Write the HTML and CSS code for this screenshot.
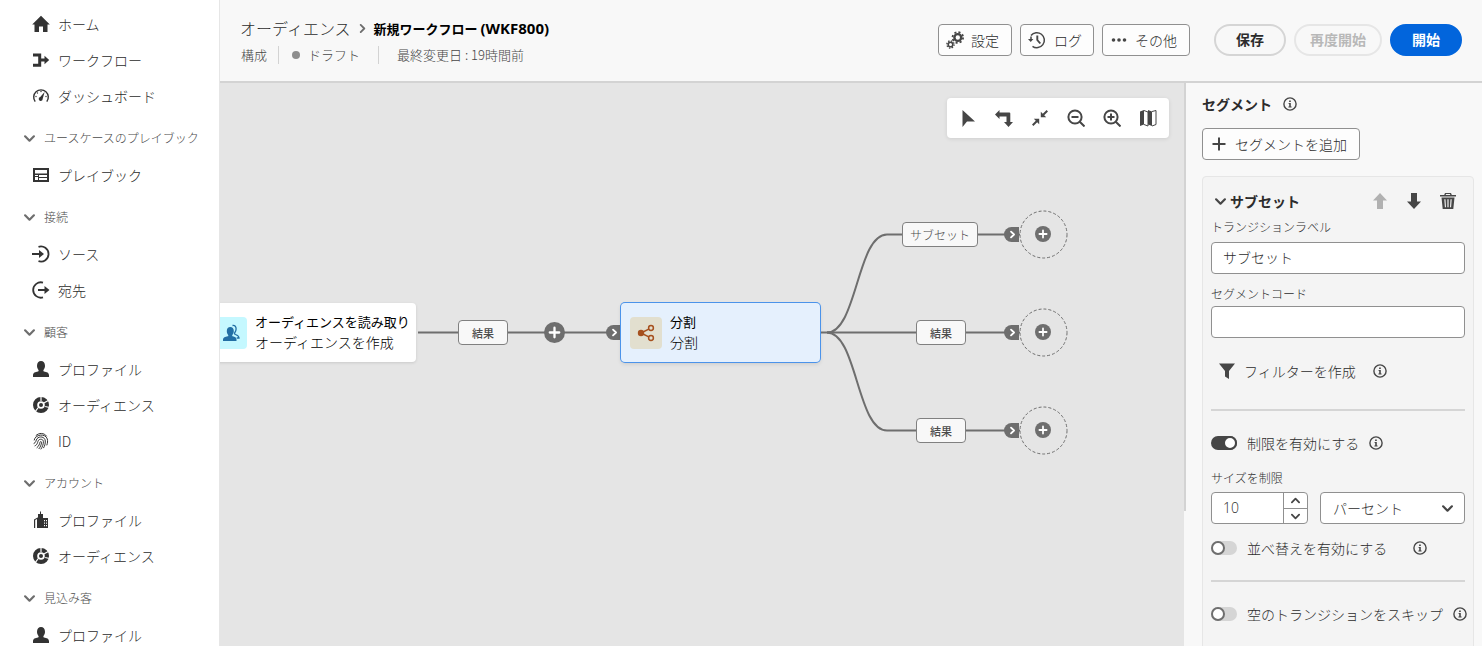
FILE: index.html
```html
<!DOCTYPE html>
<html lang="ja">
<head>
<meta charset="utf-8">
<title>新規ワークフロー (WKF800)</title>
<link rel="stylesheet" href="styles.css">
</head>
<body>
<svg class="sprite" aria-hidden="true">
  <symbol id="chev" viewBox="0 0 10 10"><path d="M1 3l4 4 4-4" fill="none" stroke="currentColor" stroke-width="2" stroke-linecap="round" stroke-linejoin="round"/></symbol>
  <symbol id="info" viewBox="0 0 14 14"><circle cx="7" cy="7" r="6.1" fill="none" stroke="currentColor" stroke-width="1.4"/><path d="M6.1 3.4h1.7v1.5H6.1zM5.6 6h2.2v3.6h.8v1H5.4v-1h.8V7h-.6z" fill="currentColor"/></symbol>
  <symbol id="user" viewBox="0 0 18 18"><path d="M17 15.2c0-2.600-2.300-3.300-5-3.800-.6-.1-.8-.8-.5-1.400.9-1.100 1.500-2.700 1.500-4.200C13 2.700 11.400 1 9 1S5 2.700 5 5.800c0 1.500.6 3.100 1.500 4.200.3.600.1 1.300-.5 1.400-2.700.5-5 1.200-5 3.800V17h16z" fill="currentColor"/></symbol>
  <symbol id="audience" viewBox="0 0 18 18"><circle cx="9" cy="9" r="5.900" fill="none" stroke="currentColor" stroke-width="4.200"/><circle cx="9" cy="9" r="2" fill="currentColor"/><path d="M9 5V.5M11.800 7l5-2.800M6.300 11.500L3.200 15.700M13.200 10.500l4.300 1" stroke="#fff" stroke-width="1.200"/></symbol>
  <symbol id="plus" viewBox="0 0 20 20"><circle cx="10" cy="10" r="10" fill="#6e6e6e"/><path d="M10 5.500v9M5.500 10h9" stroke="#fff" stroke-width="2.200" stroke-linecap="round"/></symbol>
  <symbol id="port" viewBox="0 0 16 16"><path d="M16 0H8a8 8 0 0 0 0 16h8z" fill="#6e6e6e"/><path d="M7.500 5l3.200 3-3.200 3" fill="none" stroke="#fff" stroke-width="2" stroke-linecap="round" stroke-linejoin="round"/></symbol>
</svg>
<div class="app">
  <nav class="sidebar" aria-label="メインナビゲーション">
    <a class="nav-item" href="#"><svg class="icon"><path d="M9 .8L.2 9.500h2.300V17h4.500v-5.500h4V17h4.500V9.500h2.300z" fill="currentColor"/></svg>ホーム</a>
    <a class="nav-item" href="#"><svg class="icon"><path d="M1 2.500h8.200v5h3.300V4.800L17.200 9l-4.700 4.200v-2.700H9.200v5.300H1v-3h5.200V5.500H1z" fill="currentColor"/></svg>ワークフロー</a>
    <a class="nav-item" href="#"><svg class="icon"><path d="M3.200 14.600A7.300 7.300 0 1 1 14.800 14.600" fill="none" stroke="currentColor" stroke-width="1.400"/><path d="M12.600 5L8.200 10a2 2 0 1 0 2.500 1.800z" fill="currentColor"/><g fill="currentColor"><circle cx="9" cy="4.500" r=".7"/><circle cx="5.500" cy="6" r=".7"/><circle cx="4" cy="9.500" r=".7"/><circle cx="14" cy="9.500" r=".7"/></g></svg>ダッシュボード</a>
    <button class="nav-heading"><svg class="chev"><use href="#chev"/></svg>ユースケースのプレイブック</button>
    <a class="nav-item" href="#"><svg class="icon"><path d="M1 2h16v14H1zM3 4v3.500h12V4zM3 9v1h3V9zM3 11v3h3v-3zM7 9v2h8V9zM7 12v2h8v-2z" fill="currentColor" fill-rule="evenodd"/></svg>プレイブック</a>
    <button class="nav-heading"><svg class="chev"><use href="#chev"/></svg>接続</button>
    <a class="nav-item" href="#"><svg class="icon"><path d="M6.500 1.800A7.600 7.600 0 1 1 6.500 16.200" fill="none" stroke="currentColor" stroke-width="1.800"/><path d="M0 8h7V5l5 4-5 4v-3H0z" fill="currentColor"/></svg>ソース</a>
    <a class="nav-item" href="#"><svg class="icon"><path d="M11 1.600A7.700 7.700 0 1 0 11 16.400" fill="none" stroke="currentColor" stroke-width="1.800"/><path d="M6 8h6.500V5l5 4-5 4v-3H6z" fill="currentColor"/></svg>宛先</a>
    <button class="nav-heading"><svg class="chev"><use href="#chev"/></svg>顧客</button>
    <a class="nav-item" href="#"><svg class="icon"><use href="#user"/></svg>プロファイル</a>
    <a class="nav-item" href="#"><svg class="icon"><use href="#audience"/></svg>オーディエンス</a>
    <a class="nav-item" href="#"><svg class="icon"><path d="M4 3.500c3-3 8-2.800 10.500.5M2.200 8C3 2.200 13.500 1 15.300 7c.5 2 .3 4-.4 6M2 11.500c2.200-.8 1.800-3.300 3-4.800C7.300 3.800 13 4.500 13.300 9c.1 2.800-.6 5-1.700 6.800M3 13.800C6 12.500 5.300 10 6.400 8.400c1.400-1.900 4.900-1.400 5 1.200C11.400 12.500 10.300 15 9 17M5 15.600c2.300-1.700 2.400-3.700 3-5.400.4-1 1.600-.8 1.500.3C9.400 12.800 8.300 15 7 16.700" fill="none" stroke="currentColor" stroke-linecap="round"/></svg>ID</a>
    <button class="nav-heading"><svg class="chev"><use href="#chev"/></svg>アカウント</button>
    <a class="nav-item" href="#"><svg class="icon"><path d="M2 17V8.500l4-2.200V17H5V8L3.200 9v8zM6 17V3h2V.5h1V3h2v4h5v10zM12 9v1.200h1V9zM14 9v1.200h1V9zM12 11.500v1.200h1v-1.200zM14 11.500v1.200h1v-1.200zM12 14v1.200h1V14zM14 14v1.200h1V14z" fill="currentColor" fill-rule="evenodd"/></svg>プロファイル</a>
    <a class="nav-item" href="#"><svg class="icon"><use href="#audience"/></svg>オーディエンス</a>
    <button class="nav-heading"><svg class="chev"><use href="#chev"/></svg>見込み客</button>
    <a class="nav-item" href="#"><svg class="icon"><use href="#user"/></svg>プロファイル</a>
  </nav>

  <div class="workspace">
    <header class="topbar">
      <div class="titles">
        <div class="crumbs"><a href="#">オーディエンス</a><svg class="crumb-chev"><use href="#chev"/></svg><h1>新規ワークフロー <span class="code">(WKF800)</span></h1></div>
        <div class="meta"><span>構成</span><span class="status">ドラフト</span><span>最終変更日 : 19時間前</span></div>
      </div>
      <div class="actions">
        <button class="btn"><svg class="icon"><g fill="none" stroke="currentColor"><circle cx="11.800" cy="6.500" r="3.400" stroke-width="2.400"/><circle cx="11.800" cy="6.500" r="5.300" stroke-width="1.800" stroke-dasharray="2.080 2.080"/><circle cx="4.500" cy="13.500" r="2.300" stroke-width="1.600"/><circle cx="4.500" cy="13.500" r="3.600" stroke-width="1.400" stroke-dasharray="1.410 1.410"/></g></svg>設定</button>
        <button class="btn btn-log"><svg class="icon"><path d="M3 4.500A7.500 7.500 0 1 1 4.500 15.300M3 5.500v3" fill="none" stroke="currentColor" stroke-width="1.500"/><path d="M0 8h5.400L2.700 11z" fill="currentColor"/><path d="M9.300 4.500V9l3 3.500" fill="none" stroke="currentColor" stroke-width="1.900"/></svg>ログ</button>
        <button class="btn"><svg class="icon"><g fill="currentColor"><circle cx="3.500" cy="9" r="1.800"/><circle cx="9" cy="9" r="1.800"/><circle cx="14.500" cy="9" r="1.800"/></g></svg>その他</button>
        <button class="pill pill-first">保存</button>
        <button class="pill" disabled>再度開始</button>
        <button class="pill pill-cta">開始</button>
      </div>
    </header>

    <div class="body">
      <main class="canvas">
        <svg class="edges" aria-hidden="true">
          <g fill="none" stroke="#6e6e6e" stroke-width="2">
            <path d="M198 249.500H401"/>
            <path d="M600 249.500H800"/>
            <path d="M607 249.500C637 249.500 637 151.500 667 151.500H800"/>
            <path d="M607 249.500C637 249.500 637 347.500 667 347.500H800"/>
          </g>
          <g fill="none" stroke="#6e6e6e" stroke-dasharray="3 2">
            <circle cx="823.500" cy="151.500" r="23.500"/><circle cx="823.500" cy="249.500" r="23.500"/><circle cx="823.500" cy="347.500" r="23.500"/>
          </g>
          <use href="#port" x="386" y="242" width="15" height="15"/>
          <use href="#port" x="784" y="144" width="15" height="15"/>
          <use href="#port" x="784" y="242" width="15" height="15"/>
          <use href="#port" x="784" y="340" width="15" height="15"/>
          <use href="#plus" x="324" y="239" width="21" height="21"/>
          <use href="#plus" x="815" y="143" width="16" height="16"/>
          <use href="#plus" x="815" y="241" width="16" height="16"/>
          <use href="#plus" x="815" y="339" width="16" height="16"/>
        </svg>

        <div class="node node-read">
          <span class="node-icon teal"><svg class="icon"><path d="M10.500 1.500c2.500-.4 3.700 1.200 3.600 3.500 0 1.700-.7 3-1.500 4-.4.700.2 1.200.9 1.500 2 .8 3.500 1.500 3.500 3.500h-2.300" fill="none" stroke="currentColor" stroke-width="1.300"/><path d="M14.500 15.500c0-2-1.600-2.800-3.700-3.200-.6-.2-.8-.8-.4-1.400.8-1 1.400-2.300 1.400-3.900 0-2.600-1.400-4-3.500-4S4.800 4.400 4.800 7c0 1.600.5 2.900 1.300 3.900.4.600.3 1.200-.4 1.400-2.600.4-4.700 1.200-4.700 3.200V17h13.500z" fill="currentColor"/></svg></span>
          <span class="node-text"><strong>オーディエンスを読み取り</strong><span>オーディエンスを作成</span></span>
        </div>
        <div class="node node-split">
          <span class="node-icon sand"><svg class="icon"><circle cx="4" cy="9" r="3.200" fill="currentColor"/><g fill="none" stroke="currentColor" stroke-width="1.500"><circle cx="14" cy="4" r="2.400"/><circle cx="14" cy="14" r="2.400"/><path d="M4 9l7.800-3.900M4 9l7.800 3.900"/></g></svg></span>
          <span class="node-text"><strong>分割</strong><span>分割</span></span>
        </div>
        <span class="tag tag-in">結果</span>
        <span class="tag tag-subset">サブセット</span>
        <span class="tag tag-mid">結果</span>
        <span class="tag tag-low">結果</span>

        <div class="toolbar">
          <button aria-label="選択"><svg class="icon"><path d="M3.500 1v17l4.500-5.500h8z" fill="currentColor"/></svg></button>
          <button aria-label="向きを変更"><svg class="icon"><path d="M4.500 1v2.500h9.800a1 1 0 0 1 1 1V13H18l-4.500 5L9 13h2.500V7.500h-7V10L0 5.500z" fill="currentColor"/></svg></button>
          <button aria-label="全体を表示"><svg class="icon"><path d="M9.800 8.200V2.800l2 2L15.600 1 17 2.400l-3.800 3.800 2 2zM8.200 9.800v5.400l-2-2L2.400 17 1 15.600l3.800-3.800-2-2z" fill="currentColor"/></svg></button>
          <button aria-label="縮小"><svg class="icon"><g fill="none" stroke="currentColor" stroke-width="2"><circle cx="8" cy="8" r="6.600"/><path d="M12.500 12.500l5 5M4.500 8h7"/></g></svg></button>
          <button aria-label="拡大"><svg class="icon"><g fill="none" stroke="currentColor" stroke-width="2"><circle cx="8" cy="8" r="6.600"/><path d="M12.500 12.500l5 5M4.500 8h7M8 4.500v7"/></g></svg></button>
          <button aria-label="マップ"><svg class="icon"><path d="M1 2.500L5 1v14.500L1 17zM9 1l4 1.500V17l-4-1.500z" fill="currentColor"/><path d="M5 1.500l4 1.500V17l-4-1.500M13 2.500l4-1V15.500L13 17" fill="none" stroke="currentColor"/></svg></button>
        </div>
      </main>

      <aside class="panel">
        <div class="panel-title"><h2>セグメント</h2><svg class="info"><use href="#info"/></svg></div>
        <button class="btn btn-add"><svg class="icon"><path d="M9 2.500v13M2.500 9h13" stroke="currentColor" stroke-width="2"/></svg>セグメントを追加</button>
        <section class="card">
          <div class="card-head">
            <svg class="chev dark"><use href="#chev"/></svg><h3>サブセット</h3>
            <button disabled aria-label="上へ"><svg class="icon"><path d="M9 1l7 7.500h-4V17H6V8.500H2z" fill="currentColor"/></svg></button>
            <button aria-label="下へ"><svg class="icon"><path d="M9 17l7-7.500h-4V1H6v8.500H2z" fill="currentColor"/></svg></button>
            <button aria-label="削除"><svg class="icon"><path d="M6 1h6l.8 2H17v1.500H1V3h4.200zM7 2l-.3 1h4.600L11 2zM2.500 5.500h13L14.300 17H3.700zM5.300 7.200l.6 8H7l-.5-8zM8.400 7.200v8h1.200v-8zM11.500 7.200l-.5 8h1.100l.6-8z" fill="currentColor" fill-rule="evenodd"/></svg></button>
          </div>
          <label class="field"><span>トランジションラベル</span><input type="text" value="サブセット"></label>
          <label class="field"><span>セグメントコード</span><input type="text"></label>
          <div class="filter"><button><svg class="icon"><path d="M1 1.500h16l-6 7.500v8l-4-2.500V9z" fill="currentColor"/></svg>フィルターを作成</button><svg class="info"><use href="#info"/></svg></div>
          <hr>
          <div class="switch-row"><label><input type="checkbox" class="switch" checked>制限を有効にする</label><svg class="info"><use href="#info"/></svg></div>
          <div class="limit">
            <label for="limit">サイズを制限</label>
            <div class="limit-row">
              <div class="stepper"><input id="limit" type="number" value="10"><div class="steps"><button aria-label="増やす"><svg class="chev up"><use href="#chev"/></svg></button><button aria-label="減らす"><svg class="chev"><use href="#chev"/></svg></button></div></div>
              <div class="select"><select aria-label="単位"><option>パーセント</option></select><svg class="chev"><use href="#chev"/></svg></div>
            </div>
          </div>
          <div class="switch-row sort"><label><input type="checkbox" class="switch">並べ替えを有効にする</label><svg class="info"><use href="#info"/></svg></div>
          <hr>
          <div class="switch-row"><label><input type="checkbox" class="switch">空のトランジションをスキップ</label><svg class="info"><use href="#info"/></svg></div>
        </section>
      </aside>
    </div>
  </div>
</div>
</body>
</html>
```
FILE: styles.css
```css
*, *::before { box-sizing: border-box; }
body {
  margin: 0;
  font-family: "Noto Sans CJK JP", sans-serif;
  font-size: 14px;
  font-weight: 300;
  line-height: 20px;
  color: #2c2c2c;
}
button, input, select { font: inherit; color: inherit; }
button { margin: 0; padding: 0; border: 0; background: none; cursor: pointer; }
a { color: inherit; text-decoration: none; }
h1, h2, h3 { margin: 0; font-size: 14px; font-weight: 700; }
svg { display: block; flex: none; }
.sprite { position: absolute; width: 0; height: 0; }
.icon { width: 18px; height: 18px; color: #464646; }
.chev { width: 11px; height: 11px; color: #6e6e6e; }
.info { width: 14px; height: 14px; color: #464646; }

.app { display: flex; height: 100vh; overflow: hidden; }
.sidebar {
  flex: none;
  width: 220px;
  padding-top: 6px;
  overflow: hidden;
  border-right: 1px solid #e6e6e6;
  background: #fff;
}
.nav-item { display: flex; align-items: center; gap: 8px; height: 36px; padding-left: 32px; }
.nav-item .icon { color: #333; }
.nav-heading {
  display: flex;
  align-items: center;
  gap: 9px;
  width: 100%;
  height: 43px;
  padding: 5px 0 0 24px;
  font-size: 12px;
  color: #4b4b4b;
  white-space: nowrap;
}

.workspace { flex: 1; min-width: 0; display: flex; flex-direction: column; }
.topbar {
  display: flex;
  justify-content: space-between;
  height: 83px;
  padding: 16px 20px 0;
  border-bottom: 2px solid #d3d3d3;
  background: #f8f8f8;
}
.crumbs { display: flex; align-items: center; height: 24px; white-space: nowrap; }
.crumbs a { font-size: 16px; }
.crumbs h1 { font-size: 13px; color: #000; }
.code { font-family: "Open Sans", sans-serif; font-size: 15px; }
.crumb-chev { width: 9px; height: 9px; margin: 0 7px; color: #6e6e6e; transform: rotate(-90deg); }
.meta { display: flex; align-items: center; height: 18px; margin-top: 6px; font-size: 13px; line-height: 18px; white-space: nowrap; color: #464646; }
.meta span:first-child { padding: 0 11px 0 1px; }
.meta .status { display: flex; align-items: center; gap: 8px; padding: 0 18px 0 13px; border: solid #d3d3d3; border-width: 0 1px; }
.status::before { content: ""; width: 8px; height: 8px; border-radius: 50%; background: #8e8e8e; }
.meta span:last-child { padding-left: 18px; }
.actions { display: flex; gap: 8px; padding-top: 8px; }
.btn {
  display: flex;
  align-items: center;
  gap: 7px;
  height: 32px;
  padding: 0 12px 0 7px;
  border: 1px solid #909090;
  border-radius: 4px;
  background: #fdfdfd;
  white-space: nowrap;
}
.btn-log { gap: 8px; padding-right: 11px; }
.pill {
  height: 32px;
  padding: 0 20px 2px;
  border: 2px solid #d5d5d5;
  border-radius: 16px;
  font-weight: 700;
  line-height: 26px;
  white-space: nowrap;
}
.pill-first { margin-left: 16px; }
.pill:disabled { padding: 0 14px 2px; border-color: #e6e6e6; color: #b8b8b8; }
.pill-cta { border-color: #0265dc; background: #0265dc; color: #fff; }

.body { flex: 1; min-height: 0; display: flex; }
.canvas { position: relative; flex: 1; min-width: 0; overflow: hidden; background: #e5e5e5; }
.edges { position: absolute; left: 0; top: 0; width: 100%; height: 100%; }
.node {
  position: absolute;
  top: 220px;
  display: flex;
  align-items: center;
  gap: 8px;
  height: 59px;
  padding-left: 9px;
  border-radius: 4px;
  background: #fff;
  box-shadow: 0 1px 3px rgba(0, 0, 0, .12);
  color: #000;
  white-space: nowrap;
}
.node-read { left: -14px; width: 210px; }
.node-split { left: 401px; width: 199px; background: #e5f0fd; box-shadow: 0 0 0 1px #4b93ea, 0 2px 4px rgba(0, 0, 0, .12); }
.node-icon { display: grid; place-items: center; width: 32px; height: 32px; border-radius: 4px; }
.teal { background: #c5f8ff; }
.teal .icon { color: #226fa5; }
.sand { background: #e2dfcf; }
.sand .icon { color: #a6501e; }
.node-text { display: flex; flex-direction: column; line-height: 21px; padding-bottom: 2px; }
.node-text strong { font-size: 13px; }
.tag {
  position: absolute;
  display: grid;
  place-items: center;
  width: 50px;
  height: 25px;
  border: 1px solid #808080;
  border-radius: 4px;
  background: #f8f8f8;
  font-size: 11px;
  font-weight: 500;
  color: #4b4b4b;
}
.tag-in { left: 238px; top: 237px; }
.tag-subset { left: 682px; top: 139px; width: 76px; font-size: 12px; font-weight: 300; }
.tag-mid { left: 696px; top: 237px; }
.tag-low { left: 696px; top: 335px; }
.toolbar {
  position: absolute;
  top: 15px;
  right: 15px;
  display: flex;
  gap: 18px;
  padding: 11px 12px;
  border-radius: 4px;
  background: #fff;
  box-shadow: 0 1px 4px rgba(0, 0, 0, .1);
}

.panel {
  position: relative;
  flex: none;
  width: 298px;
  padding: 11px 8px 0 18px;
  overflow: hidden;
  background: #f8f8f8;
}
.panel::before { content: ""; position: absolute; left: 0; top: 0; width: 2px; height: 76%; background: #d3d3d3; }
.panel-title { display: flex; align-items: center; gap: 11px; height: 20px; margin-bottom: 14px; }
.btn-add { gap: 7px; }
.card { min-height: 100%; margin-top: 16px; padding: 12px 8px; border: 1px solid #e6e6e6; border-radius: 4px; background: #f4f4f4; }
.card-head { display: flex; align-items: center; height: 24px; }
.card-head h3 { flex: 1; margin-left: 4px; }
.dark { margin-left: 4px; color: #464646; }
.card-head button { margin-left: 16px; }
.card-head button:last-child { margin-right: 8px; }
.card-head button:disabled .icon { color: #b1b1b1; }
.field { display: block; margin-bottom: 8px; font-size: 12px; }
.field span { display: block; height: 24px; line-height: 24px; }
.card-head + .field span { height: 29px; line-height: 28px; }
input[type="text"], .stepper, .select select {
  display: block;
  width: 100%;
  height: 32px;
  padding: 0 12px;
  border: 1px solid #909090;
  border-radius: 4px;
  background: #fff;
  font-size: 14px;
  outline: 0;
}
input[type="text"] { padding: 0 12px 2px 11px; }
.filter { display: flex; align-items: center; gap: 17px; height: 20px; margin: 23px 0 28px 7px; }
.filter button { display: flex; align-items: center; gap: 8px; }
hr { height: 2px; margin: 0; border: 0; background: #d5d5d5; }
.switch-row { display: flex; align-items: center; gap: 10px; height: 20px; white-space: nowrap; margin-top: 22px; }
.switch-row label { display: flex; align-items: center; gap: 10px; }
.switch {
  appearance: none;
  position: relative;
  flex: none;
  width: 26px;
  height: 14px;
  margin: 0;
  border-radius: 7px;
  background: #d5d5d5;
}
.switch::before { content: ""; position: absolute; left: 0; top: 0; width: 14px; height: 14px; border: 2px solid #6e6e6e; border-radius: 50%; background: #fff; }
.switch:checked { background: #464646; }
.switch:checked::before { left: 12px; border-color: #464646; }
.limit label { display: block; margin-top: 15px; height: 24px; font-size: 12px; line-height: 20px; }
.limit-row { display: flex; gap: 12px; }
.stepper { display: flex; flex: none; width: 97px; padding: 0; overflow: hidden; }
.stepper input { flex: 1; min-width: 0; padding: 0 11px; border: 0; outline: 0; background: none; font-family: "Open Sans", sans-serif; appearance: textfield; }
.stepper input::-webkit-inner-spin-button { appearance: none; margin: 0; }
.steps { display: grid; grid-template-rows: 1fr 1fr; width: 24px; border-left: 1px solid #909090; }
.steps button { display: grid; place-items: center; }
.steps button + button { border-top: 1px solid #909090; }
.steps .chev { width: 9px; height: 9px; color: #464646; }
.up { transform: rotate(180deg); }
.select { position: relative; flex: 1; }
.select select { appearance: none; }
.select .chev { position: absolute; right: 12px; top: 11px; color: #464646; }
.sort { margin: 14px 0 22px; gap: 26px; }
```
